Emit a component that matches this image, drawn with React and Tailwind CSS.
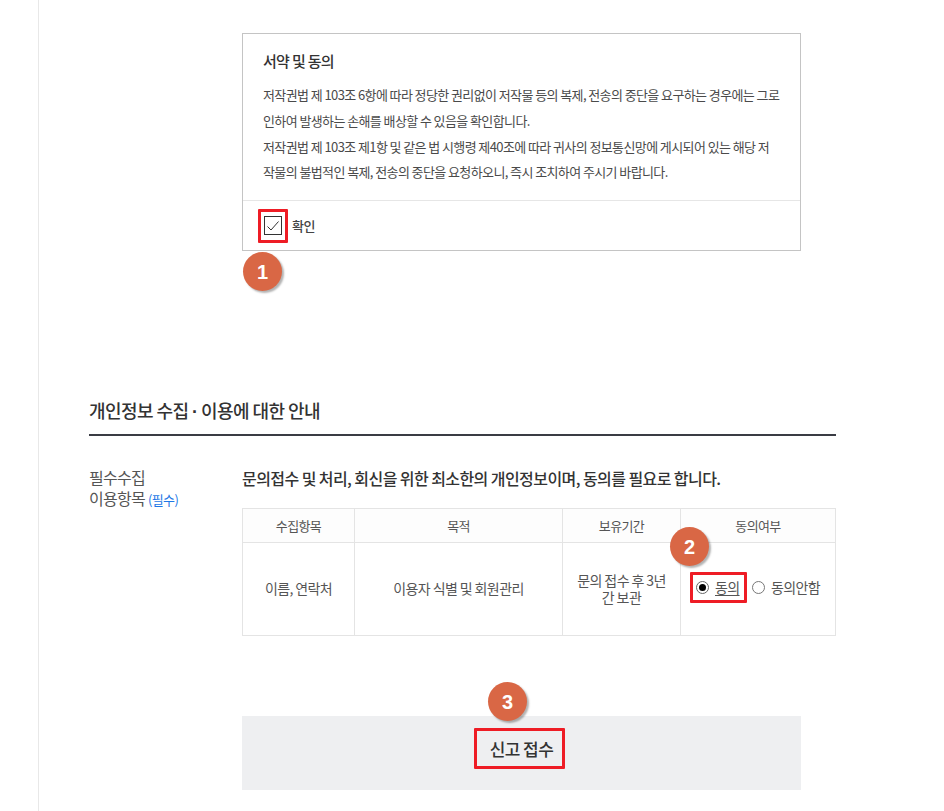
import React from 'react';

const Badge = ({ n, className }) => (
  <div className={`absolute w-[39px] h-[39px] rounded-full bg-[#d96745] text-white text-[20px] font-bold flex items-center justify-center shadow-[2px_2px_2px_rgba(0,0,0,0.3)] font-['Liberation_Sans',sans-serif] ${className}`}>
    {n}
  </div>
);

const App = () => {
  return (
    <div className="h-[811px] overflow-hidden bg-white font-['Noto_Sans_CJK_KR',sans-serif] text-[#333]">
      <div className="ml-[38px] w-[906px] h-full border-l border-[#e8e8e8] pl-[50px] pt-[33px]">
        <div className="w-[747px]">
          {/* Agreement box */}
          <div className="relative ml-[153px] w-[559px] h-[218px] border border-[#c4c4c4]">
            <div className="h-[166px] pl-[20px] pr-[10px] pt-[17px]">
              <h3 className="text-[15px] leading-[20px] font-medium tracking-[-0.7px] text-[#333]">서약 및 동의</h3>
              <p className="mt-[11px] text-[13px] leading-[25.8px] tracking-[-0.6px] text-[#4a4a4a] whitespace-nowrap">
                저작권법 제 103조 6항에 따라 정당한 권리없이 저작물 등의 복제, 전송의 중단을 요구하는 경우에는 그로
                <br />
                인하여 발생하는 손해를 배상할 수 있음을 확인합니다.
                <br />
                저작권법 제 103조 제1항 및 같은 법 시행령 제40조에 따라 귀사의 정보통신망에 게시되어 있는 해당 저
                <br />
                작물의 불법적인 복제, 전송의 중단을 요청하오니, 즉시 조치하여 주시기 바랍니다.
              </p>
            </div>
            <div className="flex items-center h-[50px] border-t border-[#e6e6e6] pl-[15px]">
              <div className="w-[30px] h-[34px] border-[3px] border-[#ee1c25] rounded-[1px] flex items-center justify-center">
                <div className="w-[18px] h-[19px] border border-[#333] bg-white flex items-center justify-center">
                  <svg width="14" height="12" viewBox="0 0 14 12" fill="none">
                    <path d="M1.5 6.5L5 10L12.5 1.5" stroke="#333" strokeWidth="1" />
                  </svg>
                </div>
              </div>
              <span className="ml-[4px] text-[13px] font-medium tracking-[-0.5px] text-[#444]">확인</span>
            </div>
            <Badge n="1" className="left-[0px] top-[218px]" />
          </div>

          {/* Privacy section */}
          <h2 className="mt-[147px] text-[18px] leading-[24px] font-medium tracking-[-0.55px] text-[#333]">
            개인정보 수집 <span className="font-['Liberation_Sans',sans-serif] font-bold">·</span> 이용에 대한 안내
          </h2>
          <div className="mt-[10px] h-[2px] bg-[#3a3c44]" />

          <div className="mt-[30px] flex">
            <div className="w-[153px] shrink-0 text-[16px] leading-[21px] tracking-[-0.7px] text-[#555] pt-[1px]">
              필수수집
              <br />
              이용항목 <span className="text-[13px] tracking-[-0.6px] text-[#1e78e6]">(필수)</span>
            </div>
            <div className="flex-1">
              <p className="text-[16px] leading-[24px] font-medium tracking-[-0.57px] text-[#333] whitespace-nowrap">
                문의접수 및 처리, 회신을 위한 최소한의 개인정보이며, 동의를 필요로 합니다.
              </p>
              <div className="relative mt-[18px]">
                <div className="grid grid-cols-[112px_208px_118px_155px] border-t border-l border-[#e4e4e4] text-[14px] text-center text-[#555] tracking-[-0.6px]">
                  <div className="h-[34px] flex items-center justify-center text-[13px] bg-[#fdfdfd] border-r border-b border-[#e4e4e4]">수집항목</div>
                  <div className="h-[34px] flex items-center justify-center text-[13px] bg-[#fdfdfd] border-r border-b border-[#e4e4e4]">목적</div>
                  <div className="h-[34px] flex items-center justify-center text-[13px] bg-[#fdfdfd] border-r border-b border-[#e4e4e4]">보유기간</div>
                  <div className="h-[34px] flex items-center justify-center text-[13px] bg-[#fdfdfd] border-r border-b border-[#e4e4e4]">동의여부</div>
                  <div className="h-[93px] pb-[1px] flex items-center justify-center border-r border-b border-[#e4e4e4]">이름, 연락처</div>
                  <div className="h-[93px] pb-[1px] flex items-center justify-center border-r border-b border-[#e4e4e4]">이용자 식별 및 회원관리</div>
                  <div className="h-[93px] pb-[1px] flex items-center justify-center border-r border-b border-[#e4e4e4] leading-[17px]">
                    <span>
                      문의 접수 후 3년
                      <br />
                      간 보관
                    </span>
                  </div>
                  <div className="h-[93px] flex items-center border-r border-b border-[#e4e4e4] pl-[9px] pb-[3px]">
                    <div className="w-[57px] h-[31px] border-[3px] border-[#ee1c25] rounded-[1px] flex items-center pl-[3px]">
                      <span className="w-[13px] h-[13px] rounded-full border border-[#666] flex items-center justify-center bg-white">
                        <span className="w-[7px] h-[7px] rounded-full bg-black" />
                      </span>
                      <span className="ml-[6px] underline underline-offset-2">동의</span>
                    </div>
                    <span className="ml-[5px] w-[13px] h-[13px] rounded-full border border-[#777] bg-white" />
                    <span className="ml-[6px]">동의안함</span>
                  </div>
                </div>
                <Badge n="2" className="left-[428px] top-[19px]" />
              </div>
            </div>
          </div>

          {/* Submit */}
          <div className="relative ml-[153px] mt-[80px] w-[559px] h-[74px] bg-[#eeeff1] flex items-start justify-center pt-[12px] pr-[4px]">
            <div className="w-[91px] h-[41px] border-[3px] border-[#ee1c25] rounded-[1px] pl-[4px] flex items-center justify-center text-[17px] font-medium tracking-[-0.6px] text-[#333]">
              신고 접수
            </div>
            <Badge n="3" className="left-[246px] top-[-34px]" />
          </div>
        </div>
      </div>
    </div>
  );
};

export default App;
